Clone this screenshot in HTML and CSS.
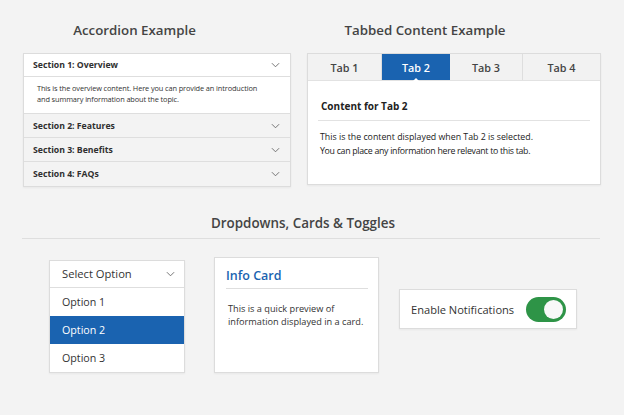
FILE: index.html
```html
<!DOCTYPE html>
<html>
<head>
<meta charset="utf-8">
<link rel="stylesheet" href="styles.css">
</head>
<body>
<div class="page">
  <div class="top-row">
    <section class="col col-left">
      <h2 class="title">Accordion Example</h2>
      <div class="accordion">
        <div class="acc-head open">
          <span>Section 1: Overview</span>
          <svg class="chev" viewBox="0 0 10 6"><path d="M1 1 L5 5 L9 1"/></svg>
        </div>
        <div class="acc-body">This is the overview content. Here you can provide an introduction<br>and summary information about the topic.</div>
        <div class="acc-head">
          <span>Section 2: Features</span>
          <svg class="chev" viewBox="0 0 10 6"><path d="M1 1 L5 5 L9 1"/></svg>
        </div>
        <div class="acc-head">
          <span>Section 3: Benefits</span>
          <svg class="chev" viewBox="0 0 10 6"><path d="M1 1 L5 5 L9 1"/></svg>
        </div>
        <div class="acc-head last">
          <span>Section 4: FAQs</span>
          <svg class="chev" viewBox="0 0 10 6"><path d="M1 1 L5 5 L9 1"/></svg>
        </div>
      </div>
    </section>
    <section class="col col-right">
      <h2 class="title">Tabbed Content Example</h2>
      <div class="tabs">
        <div class="tab-bar">
          <div class="tab t1">Tab 1</div>
          <div class="tab t2 active">Tab 2</div>
          <div class="tab t3">Tab 3</div>
          <div class="tab t4">Tab 4</div>
        </div>
        <div class="tab-panel">
          <h3 class="panel-title">Content for Tab 2</h3>
          <p class="panel-text">This is the content displayed when Tab 2 is selected.<br><span class="tight">You can place any information here relevant to this tab.</span></p>
        </div>
      </div>
    </section>
  </div>

  <h2 class="section-title">Dropdowns, Cards &amp; Toggles</h2>
  <div class="bottom-row">
    <div class="dropdown">
      <div class="dd-head">
        <span>Select Option</span>
        <svg class="chev" viewBox="0 0 10 6"><path d="M1 1 L5 5 L9 1"/></svg>
      </div>
      <div class="dd-opt">Option 1</div>
      <div class="dd-opt selected">Option 2</div>
      <div class="dd-opt">Option 3</div>
    </div>
    <div class="info-card">
      <h3 class="card-title">Info Card</h3>
      <p class="card-text">This is a quick preview of information displayed in a card.</p>
    </div>
    <div class="toggle-card">
      <span class="toggle-label">Enable Notifications</span>
      <span class="toggle"><span class="knob"></span></span>
    </div>
  </div>
</div>
</body>
</html>
```

FILE: styles.css
```css
* { box-sizing: border-box; }
html, body { margin: 0; padding: 0; }
body {
  background: #f3f3f3;
  font-family: "Open Sans", "Noto Sans", sans-serif;
  color: #333;
  width: 624px;
  height: 415px;
  overflow: hidden;
}
.page { padding: 21px 24px 0 22px; }

.top-row {
  display: grid;
  grid-template-columns: 268px 294px;
  column-gap: 16px;
  padding-left: 1px;
}
.title {
  margin: 0 0 14px;
  font-size: 13.3px;
  line-height: 18px;
  font-weight: 600;
  color: #444;
  text-align: center;
}
.col-left .title { padding-right: 45px; }
.col-right .title { padding-right: 58px; }

.accordion {
  border: 1px solid #dcdcdc;
  background: #f3f3f3;
  box-shadow: 0 1px 2px rgba(0,0,0,0.05);
}
.acc-head {
  height: 24px;
  display: flex;
  align-items: center;
  justify-content: space-between;
  padding: 0 10px 0 9px;
  font-size: 8.7px;
  font-weight: 700;
  color: #2f2f2f;
  border-bottom: 1px solid #dedede;
}
.acc-head.open { background: #fff; height: 23px; }
.acc-head.last { border-bottom: 0; }
.acc-body {
  background: #fff;
  height: 37px;
  padding: 6px 8px 0 13px;
  font-size: 7.4px;
  letter-spacing: -0.12px;
  line-height: 10.5px;
  color: #333;
  white-space: nowrap;
  border-bottom: 1px solid #dedede;
}
.chev {
  width: 9px;
  height: 6px;
  fill: none;
  stroke: #666;
  stroke-width: 1;
}

.tabs {
  border: 1px solid #dcdcdc;
  background: #fff;
  height: 132px;
  box-shadow: 0 1px 2px rgba(0,0,0,0.05);
}
.tab-bar {
  display: grid;
  grid-template-columns: 74px 68px 73px 1fr;
  height: 27px;
  background: #f2f2f2;
  border-bottom: 1px solid #e2e2e2;
}
.tab {
  display: flex;
  align-items: center;
  justify-content: center;
  font-size: 10.8px;
  font-weight: 600;
  color: #444;
  border-right: 1px solid #dedede;
  position: relative;
}
.tab.t4 { border-right: 0; }
.tab.active {
  background: #1a63b0;
  color: #fff;
  border-right: 0;
}
.tab.active::after {
  content: "";
  position: absolute;
  left: 50%;
  bottom: -1px;
  margin-left: -3px;
  border-left: 3px solid transparent;
  border-right: 3px solid transparent;
  border-bottom: 3px solid #fff;
}
.tab-panel { padding: 18px 10px 0 10px; }
.panel-title {
  margin: 0;
  font-size: 10px;
  line-height: 14px;
  font-weight: 700;
  color: #222;
  padding: 0 0 7px 3px;
  border-bottom: 1px solid #e2e2e2;
}
.panel-text {
  margin: 9px 0 0 2px;
  font-size: 8.8px;
  line-height: 14px;
  color: #222;
}
.tight { letter-spacing: -0.3px; }

.section-title {
  margin: 27px 0 0;
  font-size: 13.4px;
  line-height: 18px;
  font-weight: 600;
  color: #444;
  text-align: center;
  padding: 0 16px 6px 0;
  border-bottom: 1px solid #dedede;
}

.bottom-row {
  display: flex;
  align-items: center;
  padding: 18px 0 0 27px;
}
.dropdown {
  width: 136px;
  border: 1px solid #dcdcdc;
  background: #fff;
  box-shadow: 0 1px 2px rgba(0,0,0,0.05);
  margin-top: 2px;
}
.dd-head {
  height: 27px;
  display: flex;
  align-items: center;
  justify-content: space-between;
  padding: 0 9px 0 12px;
  font-size: 11.2px;
  color: #333;
  border-bottom: 1px solid #dedede;
}
.dd-opt {
  height: 28px;
  display: flex;
  align-items: center;
  padding-left: 12px;
  font-size: 10.7px;
  color: #333;
}
.dd-opt.selected { background: #1a63b0; color: #fff; }

.info-card {
  width: 165px;
  height: 116px;
  margin-left: 29px;
  background: #fff;
  border: 1px solid #dcdcdc;
  box-shadow: 0 1px 2px rgba(0,0,0,0.05);
  padding: 9px 10px 0 11px;
}
.card-title {
  margin: 0;
  font-size: 12.5px;
  line-height: 18px;
  font-weight: 600;
  color: #1a63b0;
  padding-bottom: 3px;
  border-bottom: 1px solid #dedede;
}
.card-text {
  margin: 13px 0 0 2px;
  font-size: 9.2px;
  line-height: 13px;
  color: #333;
}

.toggle-card {
  margin-left: 20px;
  margin-bottom: 12px;
  width: 178px;
  height: 40px;
  background: #fff;
  border: 1px solid #dcdcdc;
  box-shadow: 0 1px 2px rgba(0,0,0,0.05);
  display: flex;
  align-items: center;
  padding: 0 10px 0 11px;
  justify-content: space-between;
}
.toggle-label { font-size: 11.1px; color: #333; font-weight: 500; }
.toggle {
  width: 40px;
  height: 25px;
  border-radius: 12.5px;
  background: #2e9447;
  position: relative;
  display: block;
}
.knob {
  position: absolute;
  right: 3px;
  top: 3px;
  width: 19px;
  height: 19px;
  border-radius: 50%;
  background: #f8f8f8;
}
```
